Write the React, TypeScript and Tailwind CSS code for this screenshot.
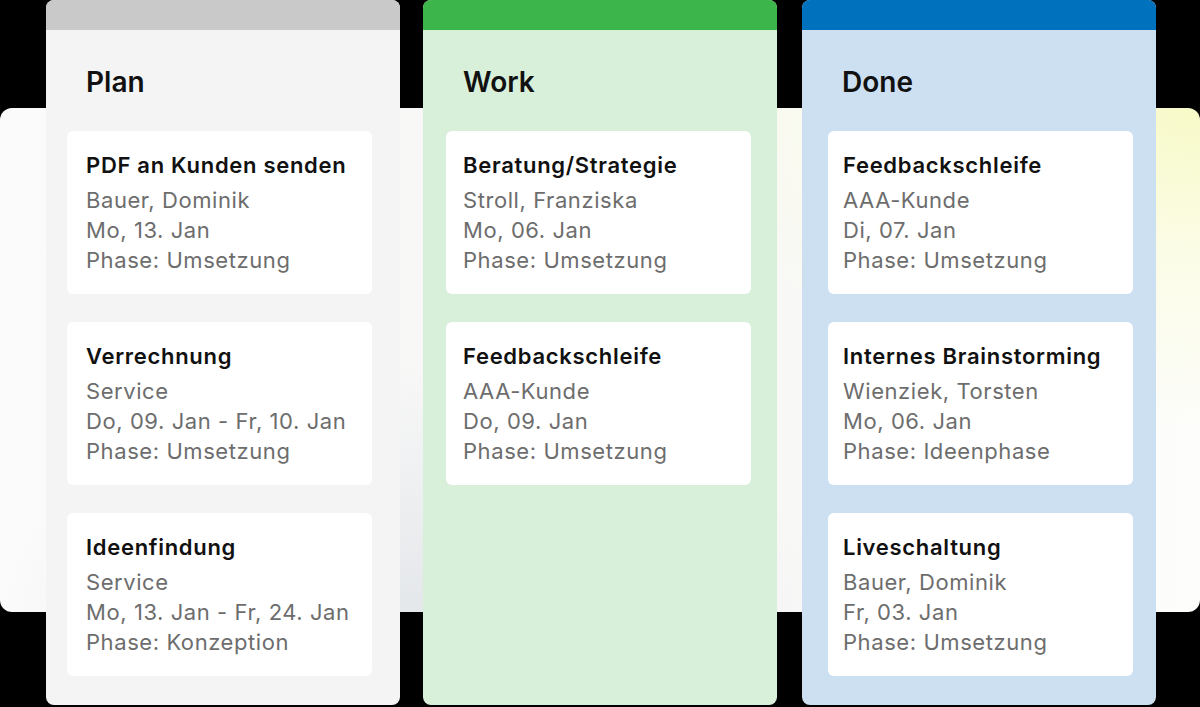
import React from "react";

type Task = {
  title: string;
  who: string;
  date: string;
  phase: string;
};

type Column = {
  name: string;
  bg: string;
  bar: string;
  cardInset: string;
  textInset: string;
  tasks: Task[];
};

const COLUMNS: Column[] = [
  {
    name: "Plan",
    bg: "bg-[#f4f4f4]",
    bar: "bg-[#c9c9c9]",
    cardInset: "pl-[21px]",
    textInset: "pl-[19px]",
    tasks: [
      { title: "PDF an Kunden senden", who: "Bauer, Dominik", date: "Mo, 13. Jan", phase: "Phase: Umsetzung" },
      { title: "Verrechnung", who: "Service", date: "Do, 09. Jan - Fr, 10. Jan", phase: "Phase: Umsetzung" },
      { title: "Ideenfindung", who: "Service", date: "Mo, 13. Jan - Fr, 24. Jan", phase: "Phase: Konzeption" },
    ],
  },
  {
    name: "Work",
    bg: "bg-[#d8efda]",
    bar: "bg-[#3cb54b]",
    cardInset: "pl-[23px]",
    textInset: "pl-[17px]",
    tasks: [
      { title: "Beratung/Strategie", who: "Stroll, Franziska", date: "Mo, 06. Jan", phase: "Phase: Umsetzung" },
      { title: "Feedbackschleife", who: "AAA-Kunde", date: "Do, 09. Jan", phase: "Phase: Umsetzung" },
    ],
  },
  {
    name: "Done",
    bg: "bg-[#cce0f1]",
    bar: "bg-[#0071bd]",
    cardInset: "pl-[26px]",
    textInset: "pl-[15px]",
    tasks: [
      { title: "Feedbackschleife", who: "AAA-Kunde", date: "Di, 07. Jan", phase: "Phase: Umsetzung" },
      { title: "Internes Brainstorming", who: "Wienziek, Torsten", date: "Mo, 06. Jan", phase: "Phase: Ideenphase" },
      { title: "Liveschaltung", who: "Bauer, Dominik", date: "Fr, 03. Jan", phase: "Phase: Umsetzung" },
    ],
  },
];

function TaskCard({ task, textInset }: { task: Task; textInset: string }) {
  return (
    <div className={`w-[305px] h-[163px] rounded-md bg-white pt-[19px] ${textInset}`}>
      <p className="text-[22px] leading-[30px] font-semibold tracking-[0.032em] text-[#111111] whitespace-nowrap">{task.title}</p>
      <div className="mt-[5px] text-[22px] leading-[30px] tracking-[0.026em] text-[#6d6d6d] whitespace-nowrap">
        <p>{task.who}</p>
        <p>{task.date}</p>
        <p>{task.phase}</p>
      </div>
    </div>
  );
}

function BoardColumn({ col }: { col: Column }) {
  return (
    <div className={`w-[354px] h-[705px] shrink-0 rounded-lg overflow-hidden flex flex-col ${col.bg}`}>
      <div className={`h-[30px] ${col.bar}`} />
      <h2 className="pl-[40px] pt-[35px] text-[28px] leading-[34px] font-semibold text-[#111111]">{col.name}</h2>
      <div className={`mt-[32px] flex flex-col gap-[28px] ${col.cardInset}`}>
        {col.tasks.map((t) => (
          <TaskCard key={t.title + t.date} task={t} textInset={col.textInset} />
        ))}
      </div>
    </div>
  );
}

export default function App() {
  return (
    <div className="relative w-[1200px] h-[707px] overflow-hidden bg-black font-['Inter','Noto_Sans',sans-serif]">
      {/* soft backdrop band behind the board */}
      <div className="absolute left-0 right-0 top-[108px] h-[504px] rounded-[12px] bg-[radial-gradient(ellipse_520px_320px_at_1200px_0px,#f8fac8_0%,#fbfce6_45%,transparent_100%),radial-gradient(ellipse_420px_260px_at_410px_520px,#e3e6ea_0%,transparent_100%),linear-gradient(90deg,#fbfbfb_0%,#f6f6f5_50%,#fdfdfb_100%)]" />
      <div className="relative flex gap-[23px] pl-[46px]">
        {COLUMNS.map((c, i) => (
          <div key={c.name} className={i === 2 ? "ml-[2px]" : ""}>
            <BoardColumn col={c} />
          </div>
        ))}
      </div>
    </div>
  );
}
